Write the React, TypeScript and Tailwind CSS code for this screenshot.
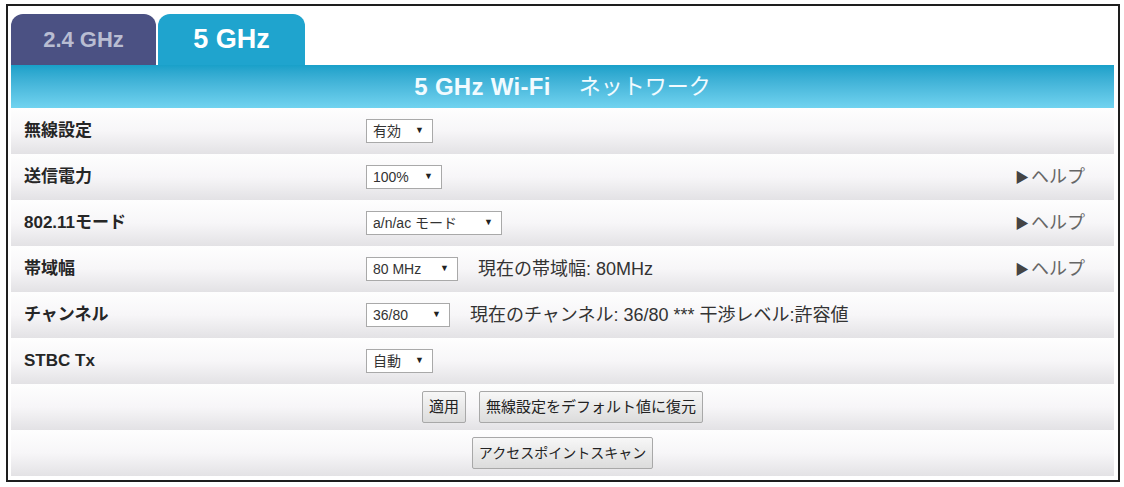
import React from 'react';

const font = { fontFamily: '"Liberation Sans", "Noto Sans CJK JP", sans-serif' };

type Row = {
  label: string;
  value: string;
  width: string;
  detail?: string;
  help?: boolean;
};

const rows: Row[] = [
  { label: '無線設定', value: '有効', width: 'w-[67px]' },
  { label: '送信電力', value: '100%', width: 'w-[76px]', help: true },
  { label: '802.11モード', value: 'a/n/ac モード', width: 'w-[136px]', help: true },
  { label: '帯域幅', value: '80 MHz', width: 'w-[92px]', detail: '現在の帯域幅: 80MHz', help: true },
  { label: 'チャンネル', value: '36/80', width: 'w-[84px]', detail: '現在のチャンネル: 36/80 *** 干渉レベル:許容値' },
  { label: 'STBC Tx', value: '自動', width: 'w-[67px]' },
];

const rowBg = 'h-[46px] bg-linear-to-b from-[#fefefe] via-[#f7f6f8] to-[#e3e2e5]';

const FakeSelect: React.FC<{ value: string; width: string }> = ({ value, width }) => (
  <div className={`${width} h-[24px] border border-[#a9a9a9] bg-white flex items-center justify-between pl-[6px] pr-[8px] text-[14px] text-[#333]`}>
    <span>{value}</span>
    <span className="text-[9px] text-[#222]">▼</span>
  </div>
);

const Btn: React.FC<{ children: React.ReactNode; className?: string }> = ({ children, className }) => (
  <button
    className={`h-[32px] px-[6px] whitespace-nowrap border border-[#a8a8a8] rounded-[2px] bg-linear-to-b from-[#f7f7f7] to-[#dcdcdc] text-[#222] ${className || 'text-[15px]'}`}
    style={font}
  >
    {children}
  </button>
);

const App: React.FC = () => {
  return (
    <div className="w-[1124px] h-[487px] bg-white pt-[4px] pl-[6px]" style={font}>
      <div className="w-[1114px] h-[478px] border-2 border-[#1e1e1e] bg-white pt-[8px] pl-[3px] pr-[4px] flex flex-col">
        {/* tabs */}
        <div className="flex gap-[2px] h-[51px] items-end">
          <div className="w-[145px] h-[51px] rounded-t-[12px] bg-[#4b5183] flex items-center justify-center text-[22px] font-bold text-[#b9bdd2]">
            2.4 GHz
          </div>
          <div className="w-[147px] h-[51px] rounded-t-[12px] bg-[#1fa4ce] flex items-center justify-center text-[27px] font-bold text-white">
            5 GHz
          </div>
        </div>

        {/* header */}
        <div className="h-[43px] bg-linear-to-b from-[#18a0c9] to-[#70d3f0] flex items-center justify-center text-[#f2fbff]">
          <span className="text-[24px] font-bold tracking-[0.3px]">5 GHz Wi-Fi</span>
          <span className="text-[22px] ml-[28px]">ネットワーク</span>
        </div>

        {rows.map((r) => (
          <div key={r.label} className={`${rowBg} flex items-center`}>
            <div className="w-[355px] pl-[13px] text-[17px] font-bold text-[#262626]">{r.label}</div>
            <FakeSelect value={r.value} width={r.width} />
            {r.detail && <div className="ml-[20px] text-[18px] text-[#333]">{r.detail}</div>}
            <div className="flex-1" />
            {r.help && (
              <div className="pr-[29px] flex items-center text-[18px] text-[#666]">
                <span className="text-[14px] text-[#444] mr-[2px]">▶</span>
                <span>ヘルプ</span>
              </div>
            )}
          </div>
        ))}

        <div className={`${rowBg} flex items-center justify-center gap-[13px]`}>
          <Btn>適用</Btn>
          <Btn>無線設定をデフォルト値に復元</Btn>
        </div>
        <div className={`${rowBg} flex items-center justify-center`}>
          <Btn className="px-[5px] text-[14px]">アクセスポイントスキャン</Btn>
        </div>
      </div>
    </div>
  );
};

export default App;
